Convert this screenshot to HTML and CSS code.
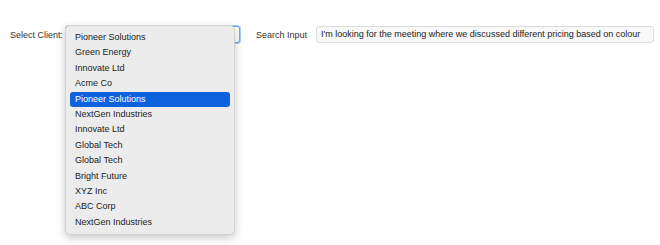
FILE: index.html
```html
<!DOCTYPE html>
<html lang="en">
<head>
  <meta charset="UTF-8" />
  <title>Meeting Search</title>
  <link rel="stylesheet" href="styles.css">
</head>
<body>

<div class="toolbar">
  <span class="field-label">Select Client:</span>
  <div class="select-wrap">
    <div class="select-box"></div>

    <!-- open dropdown menu -->
    <div class="menu">
      <div class="item">Pioneer Solutions</div>
      <div class="item">Green Energy</div>
      <div class="item">Innovate Ltd</div>
      <div class="item">Acme Co</div>
      <div class="item active">Pioneer Solutions</div>
      <div class="item">NextGen Industries</div>
      <div class="item">Innovate Ltd</div>
      <div class="item">Global Tech</div>
      <div class="item">Global Tech</div>
      <div class="item">Bright Future</div>
      <div class="item">XYZ Inc</div>
      <div class="item">ABC Corp</div>
      <div class="item">NextGen Industries</div>
    </div>
  </div>

  <span class="field-label search-label">Search Input</span>
  <div class="search">I'm looking for the meeting where we discussed different pricing based on colour</div>
</div>

</body>
</html>
```

FILE: styles.css
```css
body {
  font-family: 'Liberation Sans', Arial, sans-serif;
  background: #fff;
  margin: 0; padding: 0;
  min-height: 245px;
}
.toolbar {
  display: flex; align-items: center;
  padding: 26px 0 0 10px;
}
.field-label {
  font-size: 9px; color: #333;
}
.select-wrap {
  position: relative;
  width: 174px; height: 17px; margin-left: 3px;
}
.select-box {
  width: 100%; height: 100%; box-sizing: border-box;
  border: 1px solid #6fa8e8; border-radius: 3px;
  box-shadow: 0 0 0 1px #a9cbf2;
  background: #fff;
}
.menu {
  position: absolute; left: -1px; top: -1px; z-index: 5;
  width: 170px; padding: 4px 4px 4px;
  box-sizing: border-box;
  background: #ececec; border: 1px solid #d2d2d2; border-radius: 5px;
  box-shadow: 0 3px 8px rgba(0,0,0,0.22);
}
.item {
  height: 15.4px; line-height: 15.4px; padding-left: 5px;
  font-size: 9px; color: #222; border-radius: 3px;
  white-space: nowrap;
}
.item.active {
  background: #0d62e0; color: #fff;
}
.search-label {
  margin-left: 16px;
}
.search {
  margin-left: 9px; width: 338px; height: 17px; line-height: 15px;
  box-sizing: border-box;
  padding: 0 4px; border: 1px solid #dcdcdc; border-radius: 3px;
  background: #f8f8f8; color: #222;
  font-size: 9px; white-space: nowrap; overflow: hidden;
}
```
